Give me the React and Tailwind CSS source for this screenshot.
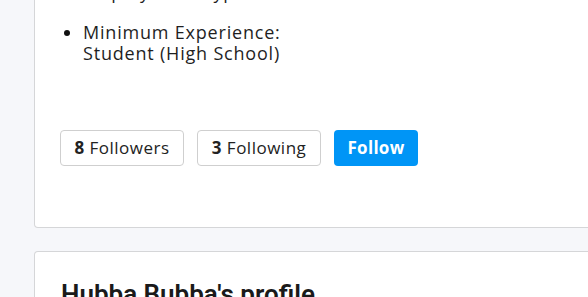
export default function App() {
  const body = { fontFamily: '"Open Sans", "Noto Sans", sans-serif' };
  return (
    <div className="min-h-[297px] w-[588px] overflow-hidden bg-[#f6f7fa] pl-[34px]" style={body}>
      <div className="-mt-[18px] w-[600px] rounded-b-[4px] border border-t-0 border-[#d5d6d8] bg-white pl-[25px] pb-[61px]">
        <ul className="list-disc pl-[23px] text-[18px] leading-[21px] tracking-[0.8px] text-[#1f1f1f] marker:text-[#111]">
          <li className="mb-[19px]">Employment Type: Full-Time</li>
          <li>Minimum Experience:<br />Student (High School)</li>
        </ul>
        <div className="mt-[66px] flex items-center gap-[13px]">
          <button className="h-[36px] w-[124px] rounded-[4px] border border-[#cfcfcf] bg-white text-[17px] tracking-[0.5px] text-[#222]">
            <span className="font-bold">8</span> Followers
          </button>
          <button className="h-[36px] w-[124px] rounded-[4px] border border-[#cfcfcf] bg-white text-[17px] tracking-[0.5px] text-[#222]">
            <span className="font-bold">3</span> Following
          </button>
          <button className="h-[36px] w-[84px] rounded-[4px] bg-[#0095f6] text-[17px] font-bold tracking-[0.3px] text-white">
            Follow
          </button>
        </div>
      </div>
      <div className="mt-[23px] h-[50px] w-[600px] rounded-t-[4px] border border-b-0 border-[#d5d6d8] bg-white pl-[26px] pt-[27px]">
        <h2 className="whitespace-nowrap text-[26px] font-semibold leading-[30px] text-[#1a1a1a]" style={{ fontFamily: 'Roboto, "Liberation Sans", sans-serif' }}>
          Hubba Bubba's profile
        </h2>
      </div>
    </div>
  );
}
